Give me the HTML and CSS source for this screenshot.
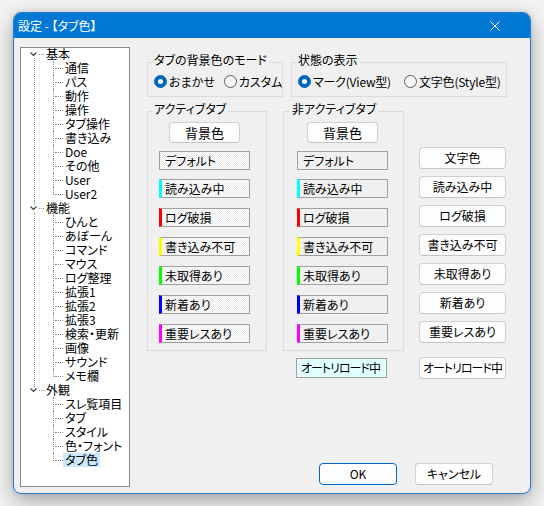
FILE: index.html
```html
<!DOCTYPE html>
<html lang="ja">
<head>
<meta charset="utf-8">
<title>設定 - 【タブ色】</title>
<link rel="stylesheet" href="styles.css">
</head>
<body>
<div class="window">
  <div class="titlebar">
    <span class="title">設定 - 【タブ色】</span>
    <svg class="close" width="10" height="10" viewBox="0 0 10 10"><path d="M0.5 0.5L9.5 9.5M9.5 0.5L0.5 9.5" stroke="#fff" stroke-width="1" fill="none"/></svg>
  </div>
  <div class="client">
    <div class="tree">
      <ul class="roots">
        <li class="root">
          <div class="row"><svg class="chev" width="7" height="4" viewBox="0 0 7 4"><path d="M0.5 0.5L3.5 3.5L6.5 0.5" stroke="#3c3c3c" stroke-width="1.1" fill="none"/></svg><span class="lbl">基本</span></div>
          <ul class="children">
            <li><span class="lbl">通信</span></li>
            <li><span class="lbl">パス</span></li>
            <li><span class="lbl">動作</span></li>
            <li><span class="lbl">操作</span></li>
            <li><span class="lbl">タブ操作</span></li>
            <li><span class="lbl">書き込み</span></li>
            <li><span class="lbl">Doe</span></li>
            <li><span class="lbl">その他</span></li>
            <li><span class="lbl">User</span></li>
            <li><span class="lbl">User2</span></li>
          </ul>
        </li>
        <li class="root">
          <div class="row"><svg class="chev" width="7" height="4" viewBox="0 0 7 4"><path d="M0.5 0.5L3.5 3.5L6.5 0.5" stroke="#3c3c3c" stroke-width="1.1" fill="none"/></svg><span class="lbl">機能</span></div>
          <ul class="children">
            <li><span class="lbl">ひんと</span></li>
            <li><span class="lbl">あぼーん</span></li>
            <li><span class="lbl">コマンド</span></li>
            <li><span class="lbl">マウス</span></li>
            <li><span class="lbl">ログ整理</span></li>
            <li><span class="lbl">拡張1</span></li>
            <li><span class="lbl">拡張2</span></li>
            <li><span class="lbl">拡張3</span></li>
            <li><span class="lbl">検索・更新</span></li>
            <li><span class="lbl">画像</span></li>
            <li><span class="lbl">サウンド</span></li>
            <li><span class="lbl">メモ欄</span></li>
          </ul>
        </li>
        <li class="root">
          <div class="row"><svg class="chev" width="7" height="4" viewBox="0 0 7 4"><path d="M0.5 0.5L3.5 3.5L6.5 0.5" stroke="#3c3c3c" stroke-width="1.1" fill="none"/></svg><span class="lbl">外観</span></div>
          <ul class="children">
            <li><span class="lbl">スレ覧項目</span></li>
            <li><span class="lbl">タブ</span></li>
            <li><span class="lbl">スタイル</span></li>
            <li><span class="lbl">色・フォント</span></li>
            <li><span class="lbl sel">タブ色</span></li>
          </ul>
        </li>
      </ul>
    </div>

    <div class="pane">
      <div class="row1">
        <fieldset class="group mode">
          <legend>タブの背景色のモード</legend>
          <div class="radios">
            <span class="radio"><span class="dot on"></span>おまかせ</span>
            <span class="radio r2"><span class="dot"></span>カスタム</span>
          </div>
        </fieldset>
        <fieldset class="group state">
          <legend>状態の表示</legend>
          <div class="radios">
            <span class="radio"><span class="dot on"></span>マーク(View型)</span>
            <span class="radio r2"><span class="dot"></span>文字色(Style型)</span>
          </div>
        </fieldset>
      </div>

      <div class="row2">
        <fieldset class="group tabs active">
          <legend>アクティブタブ</legend>
          <div class="tabcol">
            <button class="btn bgbtn">背景色</button>
            <div class="sample default">デフォルト</div>
            <div class="samples">
              <div class="sample c cyan">読み込み中</div>
              <div class="sample c red">ログ破損</div>
              <div class="sample c yellow">書き込み不可</div>
              <div class="sample c lime">未取得あり</div>
              <div class="sample c blue">新着あり</div>
              <div class="sample c magenta">重要レスあり</div>
            </div>
          </div>
        </fieldset>

        <div class="col">
          <fieldset class="group tabs inactive">
            <legend>非アクティブタブ</legend>
            <div class="tabcol">
              <button class="btn bgbtn">背景色</button>
              <div class="sample default">デフォルト</div>
              <div class="samples">
                <div class="sample c cyan">読み込み中</div>
                <div class="sample c red">ログ破損</div>
                <div class="sample c yellow">書き込み不可</div>
                <div class="sample c lime">未取得あり</div>
                <div class="sample c blue">新着あり</div>
                <div class="sample c magenta">重要レスあり</div>
              </div>
            </div>
          </fieldset>
          <div class="sample autoreload"><span class="tight">オートリロード中</span></div>
        </div>

        <div class="textbtns">
          <button class="btn">文字色</button>
          <button class="btn">読み込み中</button>
          <button class="btn">ログ破損</button>
          <button class="btn">書き込み不可</button>
          <button class="btn">未取得あり</button>
          <button class="btn">新着あり</button>
          <button class="btn">重要レスあり</button>
          <button class="btn last"><span class="tight">オートリロード中</span></button>
        </div>
      </div>

      <div class="footer">
        <button class="btn dlg ok">OK</button>
        <button class="btn dlg">キャンセル</button>
      </div>
    </div>
  </div>
</div>
</body>
</html>
```

FILE: styles.css
```css
* { box-sizing: border-box; }
html, body { margin: 0; padding: 0; }
body {
  width: 544px;
  height: 506px;
  overflow: hidden;
  background: #f3f3f3;
  font-family: "Noto Sans CJK JP", "Noto Sans", sans-serif;
  font-size: 12px;
  color: #000;
  font-feature-settings: "palt";
}

.window {
  margin: 12px 0 0 13px;
  width: 518px;
  height: 482px;
  border: 1px solid #1f7ad0;
  border-radius: 8px;
  overflow: hidden;
  background: #f0f0f0;
  box-shadow: 0 8px 22px rgba(0,0,0,0.30), 0 0 6px rgba(0,0,0,0.12);
  display: flex;
  flex-direction: column;
}

.titlebar {
  height: 25px;
  flex: none;
  background: #0078d4;
  color: #fff;
  display: flex;
  align-items: center;
  padding-left: 4px;
}
.title { flex: 1; line-height: 14px; font-size: 12px; }
.close { margin-right: 30px; }

.client {
  flex: 1;
  display: flex;
  padding: 9px 0 6px 6px;
}

/* tree */
.tree {
  width: 110px;
  height: 440px;
  flex: none;
  background: #fff;
  border: 1px solid #8a8a8a;
}
.tree ul { list-style: none; margin: 0; padding: 0; }
.tree .roots { margin-top: -1px; }
.tree li { position: relative; }
.row, .children li { height: 14px; line-height: 14px; white-space: nowrap; }
.lbl { display: inline-block; padding: 0 2px; line-height: 14px; }
.root > .row { position: relative; padding-left: 23px; }
.chev { position: absolute; left: 9px; top: 5px; }
.root > .row::before {
  content: ""; position: absolute; left: 18px; width: 5px; top: 7px;
  border-top: 1px dotted #8c8c8c;
}
.root:not(:last-child)::after {
  content: ""; position: absolute; left: 13px; top: 11px; bottom: -4px;
  border-left: 1px dotted #8c8c8c;
}
.children li { padding-left: 42px; }
.children li::before {
  content: ""; position: absolute; left: 34px; width: 8px; top: 7px;
  border-top: 1px dotted #8c8c8c;
}
.children li::after {
  content: ""; position: absolute; left: 32px; top: 0; height: 14px;
  border-left: 1px dotted #8c8c8c;
}
.children li:last-child::after { height: 8px; }
.sel { background: #cce8ff; }

/* right pane */
.pane {
  margin-left: 17px;
  width: 383px;
  display: flex;
  flex-direction: column;
}

.group {
  margin: 0;
  padding: 0;
  border: 1px solid #dcdcdc;
  min-width: 0;
}
.group legend {
  margin-left: 4px;
  padding: 0 2px 4px;
  line-height: 14px;
}

.row1 { display: flex; gap: 8px; margin-top: 6px; }
.mode { width: 136px; }
.state { width: 216px; }
.radios {
  display: flex;
  align-items: center;
  height: 14px;
  margin: 3px 0 8px 6px;
  white-space: nowrap;
}
.radio { display: flex; align-items: center; gap: 2px; }
.mode .r2 { margin-left: 9px; }
.state .r2 { margin-left: 13px; }
.state .radio { letter-spacing: -0.2px; }
.dot {
  width: 13px; height: 13px; border-radius: 50%;
  border: 1px solid #5c5c5c; background: #f6f6f6;
  position: relative; flex: none;
}
.dot.on { background: #0067c0; border-color: #0067c0; }
.dot.on::after {
  content: ""; position: absolute; left: 3px; top: 3px;
  width: 5px; height: 5px; border-radius: 50%; background: #fff;
}

.row2 { display: flex; align-items: flex-start; margin-top: 5px; }
.tabs.active { width: 120px; margin-right: 16px; }
.col { width: 121px; margin-right: 15px; display: flex; flex-direction: column; }
.tabs.inactive legend { margin-left: 6px; }

.tabcol {
  padding: 2px 0 7px 11px;
  width: 102px;
  display: flex;
  flex-direction: column;
  align-items: center;
}
.tabs.inactive .tabcol { width: 104px; padding-left: 13px; }

.btn {
  font: inherit;
  font-size: 12px;
  font-feature-settings: "palt";
  color: #000;
  background: #fdfdfd;
  border: 1px solid #d0d0d0;
  border-bottom-color: #c4c4c4;
  border-radius: 4px;
  padding: 0;
  line-height: 14px;
  white-space: nowrap;
}
.bgbtn { width: 71px; height: 21px; font-size: 13px; }

.sample {
  width: 91px;
  height: 19px;
  border: 1px solid #a0a0a0;
  padding-left: 5px;
  display: flex;
  align-items: center;
  line-height: 14px;
  white-space: nowrap;
  background: #f0f0f0;
}
.active .sample {
  background-color: #fff;
  background-image: repeating-conic-gradient(#ebebeb 0 25%, #ffffff 0 50%);
  background-size: 2px 2px;
}
.sample.default { margin-top: 8px; }
.samples { display: flex; flex-direction: column; gap: 10px; margin-top: 9px; }
.sample.c { border-left-width: 3px; padding-left: 3px; }
.cyan { border-left-color: #00ffff !important; }
.red { border-left-color: #ff0000 !important; }
.yellow { border-left-color: #ffff00 !important; }
.lime { border-left-color: #00ff00 !important; }
.blue { border-left-color: #0000ff !important; }
.magenta { border-left-color: #ff00ff !important; }
.sample.autoreload {
  margin: 7px 0 0 13px;
  height: 20px;
  padding-left: 4px;
  background: #e0ffff;
}
.tight { letter-spacing: -1px; }

.textbtns {
  width: 87px;
  margin-top: 45px;
  display: flex;
  flex-direction: column;
  gap: 7px;
}
.textbtns .btn { height: 22px; }
.textbtns .last { margin-top: 7px; }

.footer {
  margin-top: auto;
  margin-bottom: 2px;
  padding-right: 37px;
  display: flex;
  justify-content: flex-end;
  gap: 18px;
}
.dlg { width: 78px; height: 22px; }
.ok { border-color: #0067c0; }
```
